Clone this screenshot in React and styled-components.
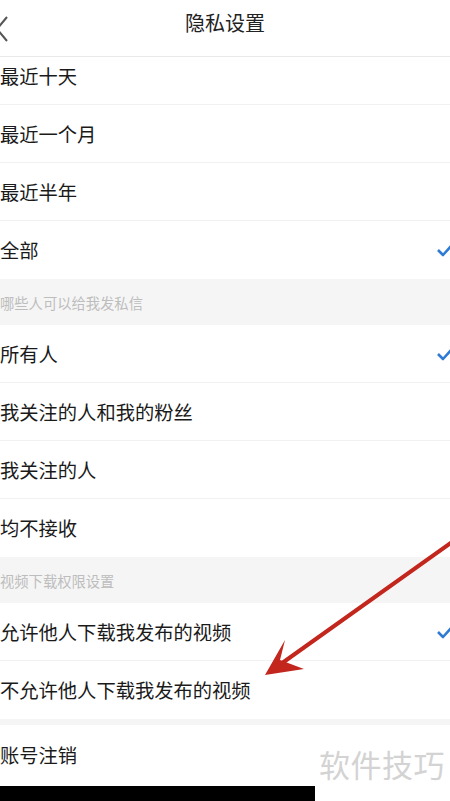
import React from 'react';
import styled, {createGlobalStyle} from 'styled-components';

// Global page reset
const GlobalStyle = createGlobalStyle`
  html, body {
    margin: 0;
    padding: 0;
    background: #ffffff;
    font-family: "Noto Sans CJK SC", "Noto Sans", sans-serif;
  }
`;

const Page = styled.div`
  position: relative;
  width: 450px;
  height: 801px;
  overflow: hidden;
  display: flex;
  flex-direction: column;
  background: #ffffff;
`;

const Header = styled.div`
  flex: none;
  height: 56px;
  display: grid;
  grid-template-columns: 60px 1fr 60px;
  align-items: center;
  border-bottom: 1px solid #e9e9e9;
  background: #ffffff;
  position: relative;
  z-index: 1;
`;

const BackButton = styled.div`
  display: flex;
  align-items: center;
  height: 100%;
`;

const Title = styled.div`
  text-align: center;
  font-size: 20px;
  color: #222;
  line-height: 1;
  margin-top: -10px;
`;

const ScrollArea = styled.div`
  flex: 1;
  overflow: hidden;
`;

const List = styled.div`
  margin-top: -10px;
  display: flex;
  flex-direction: column;
`;

const Row = styled.div`
  height: ${props => props.tall ? '60px' : '57px'};
  display: flex;
  align-items: center;
  justify-content: space-between;
  font-size: 19.3px;
  color: #1a1a1a;
  border-bottom: 1px solid ${props => props.last ? 'transparent' : '#f1f1f1'};
  white-space: nowrap;
`;

const SectionLabel = styled.div`
  height: 46px;
  display: flex;
  align-items: center;
  background: #f5f5f5;
  font-size: 14.3px;
  color: #bdbdbd;
`;

const Gap = styled.div`
  height: 6px;
  background: #f5f5f5;
`;

const Check = styled.svg`
  width: 16px;
  height: 14px;
  margin-right: -3px;
  flex: none;
`;

const BlackBar = styled.div`
  width: 315px;
  height: 16px;
  background: #000;
`;

const Watermark = styled.div`
  position: absolute;
  left: 319px;
  top: 748px;
  font-size: 31px;
  line-height: 1;
  color: #d3d3d3;
  letter-spacing: 0.5px;
  pointer-events: none;
`;

const ArrowOverlay = styled.svg`
  position: absolute;
  left: 0;
  top: 0;
  width: 450px;
  height: 801px;
  pointer-events: none;
`;

const CheckMark = () => (
    <Check viewBox="0 0 16 14">
        <polyline points="1,7 6,12 15,2" fill="none" stroke="#2f7bd4" strokeWidth="2.6" strokeLinejoin="round"/>
    </Check>
);

const sections = [
    {
        label: null,
        items: [
            {text: '最近十天'},
            {text: '最近一个月'},
            {text: '最近半年'},
            {text: '全部', checked: true},
        ],
    },
    {
        label: '哪些人可以给我发私信',
        items: [
            {text: '所有人', checked: true},
            {text: '我关注的人和我的粉丝'},
            {text: '我关注的人'},
            {text: '均不接收'},
        ],
    },
    {
        label: '视频下载权限设置',
        items: [
            {text: '允许他人下载我发布的视频', checked: true},
            {text: '不允许他人下载我发布的视频'},
        ],
    },
];

const App = () => {
    return (
        <Page>
            <GlobalStyle/>
            {/* Top navigation bar */}
            <Header>
                <BackButton>
                    <svg width="10" height="40" viewBox="0 0 10 40">
                        <polyline points="7,9 -3,21 7,33" fill="none" stroke="#555" strokeWidth="2"/>
                    </svg>
                </BackButton>
                <Title>隐私设置</Title>
                <div/>
            </Header>
            <ScrollArea>
                <List>
                    {sections.map((section, si) => (
                        <React.Fragment key={si}>
                            {section.label && <SectionLabel>{section.label}</SectionLabel>}
                            {section.items.map((item, i) => (
                                <Row key={item.text} last={i === section.items.length - 1}>
                                    <span>{item.text}</span>
                                    {item.checked && <CheckMark/>}
                                </Row>
                            ))}
                        </React.Fragment>
                    ))}
                    <Gap/>
                    <Row tall last>账号注销</Row>
                    <BlackBar/>
                </List>
            </ScrollArea>
            <Watermark>软件技巧</Watermark>
            {/* Red annotation arrow */}
            <ArrowOverlay viewBox="0 0 450 801">
                <line x1="455" y1="540" x2="278" y2="666" stroke="#c2261c" strokeWidth="4" strokeLinecap="round"/>
                <polygon points="265,675 285,640 280,660 304,669" fill="#c2261c"/>
            </ArrowOverlay>
        </Page>
    );
};

export default App;
